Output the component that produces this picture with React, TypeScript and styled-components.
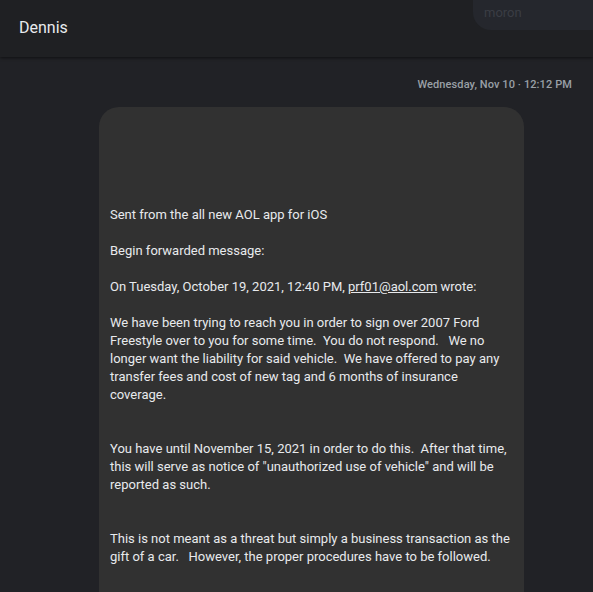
import React from "react";
import styled, { createGlobalStyle } from "styled-components";

const GlobalStyle = createGlobalStyle`
  html, body {
    margin: 0;
    padding: 0;
    background: #202124;
    font-family: Roboto, "Noto Sans", Arial, sans-serif;
  }
  #root {
    height: 592px;
    overflow: hidden;
  }
`;

const Page = styled.div`
  width: 593px;
  height: 592px;
  display: flex;
  flex-direction: column;
  background: #212226;
  overflow: hidden;
  position: relative;
`;

const Header = styled.header`
  position: relative;
  height: 57px;
  flex: 0 0 57px;
  display: flex;
  align-items: center;
  padding: 0 19px;
  background: #1f2023;
  box-shadow: 0 1px 3px rgba(0, 0, 0, 0.55);
  z-index: 2;
  overflow: hidden;
`;

const Title = styled.h1`
  margin: 0;
  margin-top: -3px;
  font-size: 16px;
  font-weight: 400;
  color: #e8eaed;
`;

const PeekBubble = styled.div`
  position: absolute;
  top: -20px;
  left: 473px;
  width: 160px;
  height: 50px;
  border-radius: 0 0 0 18px;
  background: #25272d;
  color: #3a3d44;
  font-size: 13px;
  box-sizing: border-box;
  padding: 25px 0 0 11px;
`;

const Thread = styled.main`
  flex: 1;
  display: flex;
  flex-direction: column;
  padding: 21px 21px 0 99px;
`;

const Stamp = styled.div`
  align-self: flex-end;
  font-size: 11px;
  font-weight: 500;
  color: #9aa0a6;
  letter-spacing: 0.1px;
  margin-bottom: 16px;
`;

const Bubble = styled.div`
  width: 425px;
  box-sizing: border-box;
  background: #313131;
  border-radius: 20px 20px 0 0;
  padding: 9px 11px 20px;
  color: #e8eaed;
  font-size: 13px;
  line-height: 18px;
  white-space: pre-wrap;
  min-height: 500px;
`;

const Link = styled.a`
  color: #e8eaed;
  text-decoration: underline;
`;

export default function App() {
  return (
    <>
      <GlobalStyle />
      <Page>
        <Header>
          <Title>Dennis</Title>
          <PeekBubble>moron</PeekBubble>
        </Header>
        <Thread>
          <Stamp>Wednesday, Nov 10 · 12:12 PM</Stamp>
          <Bubble>
            {"\n\n\n\n\nSent from the all new AOL app for iOS\n\nBegin forwarded message:\n\nOn Tuesday, October 19, 2021, 12:40 PM, "}
            <Link href="#">prf01@aol.com</Link>
            {" wrote:\n\nWe have been trying to reach you in order to sign over 2007 Ford Freestyle over to you for some time.  You do not respond.   We no longer want the liability for said vehicle.  We have offered to pay any transfer fees and cost of new tag and 6 months of insurance coverage.\n\n\nYou have until November 15, 2021 in order to do this.  After that time, this will serve as notice of \"unauthorized use of vehicle\" and will be reported as such.\n\n\nThis is not meant as a threat but simply a business transaction as the gift of a car.   However, the proper procedures have to be followed."}
          </Bubble>
        </Thread>
      </Page>
    </>
  );
}
